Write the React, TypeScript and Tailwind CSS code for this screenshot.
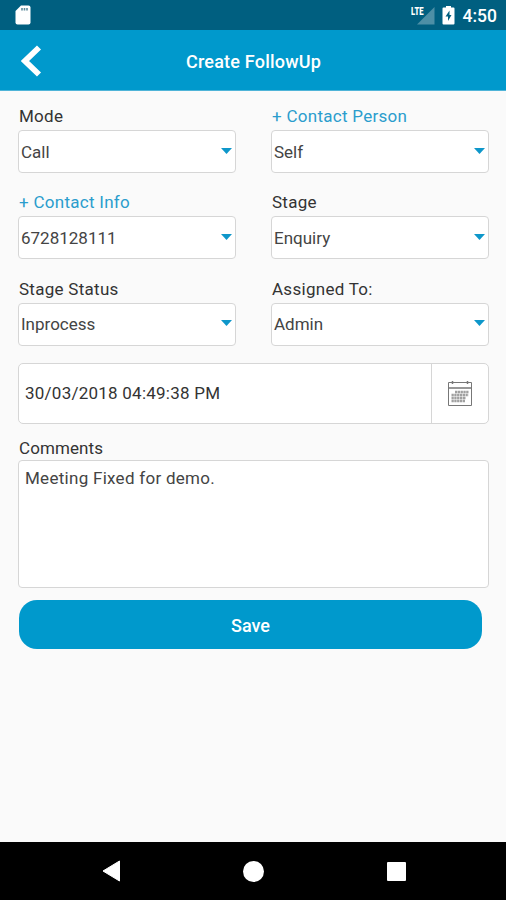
import React from 'react';

interface Field {
  label: string;
  value: string;
  link?: boolean;
}

const fields: Field[] = [
  { label: 'Mode', value: 'Call' },
  { label: '+ Contact Person', value: 'Self', link: true },
  { label: '+ Contact Info', value: '6728128111', link: true },
  { label: 'Stage', value: 'Enquiry' },
  { label: 'Stage Status', value: 'Inprocess' },
  { label: 'Assigned To:', value: 'Admin' },
];

const StatusBar: React.FC = () => (
  <div className="h-[30px] shrink-0 bg-[#005f80] flex items-center justify-between pl-[15px] pr-[9px] text-white">
    <svg width="16" height="20" viewBox="0 0 16 20">
      <path d="M6 0.5H13.5Q15.5 0.5 15.5 2.5V17.5Q15.5 19.5 13.5 19.5H2.5Q0.5 19.5 0.5 17.5V6Z" fill="#fff" />
      <path d="M7 3V5.5M9.5 3V5.5M12 3V5.5" stroke="#5c8b9c" strokeWidth="1.6" />
    </svg>
    <div className="flex items-center">
      <svg width="24" height="20" viewBox="0 0 24 20">
        <path d="M23.5 2V19.5H6Z" fill="#4d8fa6" />
        <text x="0" y="9.5" fontSize="10.5" fontWeight="900" fontFamily="Roboto, sans-serif" fill="#fff" textLength="12.5" lengthAdjust="spacingAndGlyphs">
          LTE
        </text>
      </svg>
      <svg className="ml-[7px]" width="13" height="20" viewBox="0 0 13 20">
        <path d="M4 1H9V2.5H11.5Q12.5 2.5 12.5 3.5V18.5Q12.5 19.5 11.5 19.5H1.5Q0.5 19.5 0.5 18.5V3.5Q0.5 2.5 1.5 2.5H4Z" fill="#fff" />
        <path d="M7.5 5.5L3.5 11.5H6V16L9.5 10H7.5Z" fill="#005f80" />
      </svg>
      <span className="ml-2 mt-0.5 text-[17.5px] leading-5 font-medium">4:50</span>
    </div>
  </div>
);

const Header: React.FC = () => (
  <header className="h-[61px] shrink-0 bg-[#0099cc] grid grid-cols-[1fr_auto_1fr] items-center pl-[21px] pr-[20px] border-b border-[#4fb4d8]">
    <svg className="mt-[1px]" width="22" height="32" viewBox="0 0 22 32">
      <path d="M18 2.5L4 16L18 29.5" fill="none" stroke="#fff" strokeWidth="5.8" />
    </svg>
    <h1 className="pt-0.5 text-[18px] font-medium tracking-[0.2px] text-white">Create FollowUp</h1>
  </header>
);

const SelectField: React.FC<Field> = ({ label, value, link }) => (
  <div className="h-[86.3px]">
    <div className={`h-[27px] pl-[1px] leading-[26px] tracking-[0.28px] ${link ? 'text-[#2b9dcd]' : 'text-[#333]'}`}>{label}</div>
    <div className="h-[43px] flex items-center justify-between rounded-[4px] border border-[#d6d6d6] bg-white pl-[2px] pr-[3px]">
      <span className="pt-0.5 text-[#444]">{value}</span>
      <svg className="mb-0.5" width="11" height="6" viewBox="0 0 11 6">
        <path d="M0 0H11L5.5 6Z" fill="#0e97ca" />
      </svg>
    </div>
  </div>
);

const CalendarIcon: React.FC = () => (
  <svg width="26" height="26" viewBox="0 0 26 26" fill="none" stroke="#777">
    <path d="M1.5 2.5H24.5V25.5H1.5Z" />
    <path d="M1.5 8H24.5M5.5 1V4M20.5 1V4" strokeWidth="1.5" />
    <path
      d="M8 12H21.5M4.5 15H21.5M4.5 18H19M4.5 21H18"
      stroke="#a0a0a0"
      strokeWidth="2.3"
      strokeDasharray="2.3 0.5"
    />
  </svg>
);

const NavBar: React.FC = () => (
  <nav className="h-[58px] shrink-0 bg-black flex items-center justify-between pl-[101px] pr-[100px]">
    <svg width="19" height="22" viewBox="0 0 19 22">
      <path d="M18.5 1V21L2 11Z" fill="#fff" stroke="#fff" strokeLinejoin="round" />
    </svg>
    <div className="size-[21px] rounded-full bg-white" />
    <div className="size-[19px] rounded-[1px] bg-white" />
  </nav>
);

const App: React.FC = () => {
  return (
    <div className="h-screen flex flex-col bg-[#fafafa] font-['Roboto',sans-serif] text-[17px]">
      <StatusBar />
      <Header />
      <main className="flex-1 pl-[18px] pr-[17px] pt-3">
        <div className="grid grid-cols-2 gap-x-[35px]">
          {fields.map((field) => (
            <SelectField key={field.label} {...field} />
          ))}
        </div>

        <div className="h-[61px] mt-[1px] flex rounded-[5px] border border-[#d6d6d6] bg-white">
          <div className="flex-1 flex items-center pl-1.5 tracking-[0.24px] text-[#333]">30/03/2018 04:49:38 PM</div>
          <div className="w-[57px] flex items-center justify-center border-l border-[#d6d6d6]">
            <CalendarIcon />
          </div>
        </div>

        <div className="mt-3 h-6 pl-[1px] leading-[25px] tracking-[0.1px] text-[#333]">Comments</div>
        <div className="h-[128px] rounded-[4px] border border-[#d6d6d6] bg-white pl-1.5 pt-[5px] tracking-[0.28px] text-[#444]">
          Meeting Fixed for demo.
        </div>

        <button className="mt-3 ml-[1px] block h-[49px] w-[463px] rounded-[18px] bg-[#0099cc] pt-0.5 text-[18px] font-medium text-white">
          Save
        </button>
      </main>
      <NavBar />
    </div>
  );
};

export default App;
